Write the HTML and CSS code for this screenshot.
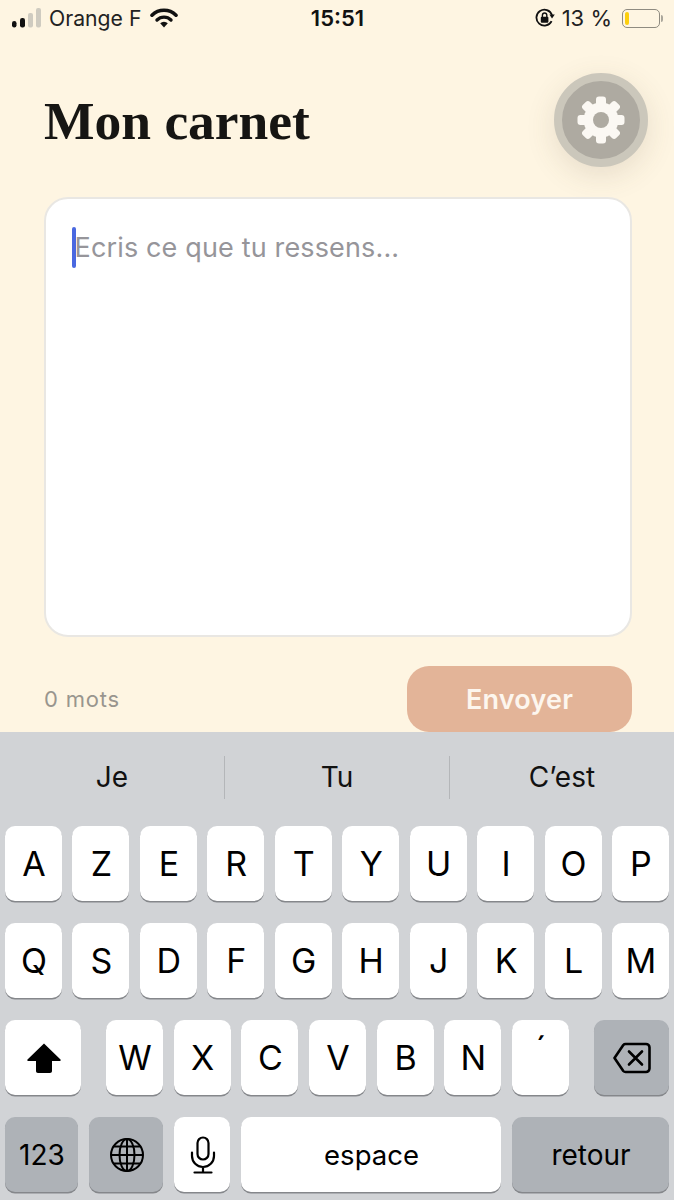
FILE: index.html
```html
<!DOCTYPE html>
<html lang="fr">
<head>
<meta charset="utf-8">
<title>Mon carnet</title>
<link rel="stylesheet" href="styles.css">
</head>
<body>
<div class="app">
  <div class="status">
    <div class="status-left">
      <svg class="signal" width="29" height="20" viewBox="0 0 29 20"><rect x="0" y="13" width="4.5" height="6.5" rx="2.2" fill="#111"/><rect x="8" y="10" width="5" height="9.5" rx="2.2" fill="#111"/><rect x="16" y="5" width="5" height="14.5" rx="2" fill="#cfcbc0"/><rect x="24" y="0" width="5" height="19.5" rx="2" fill="#cfcbc0"/></svg>
      <span class="carrier">Orange F</span>
      <svg class="wifi" width="28" height="20" viewBox="0 0 28 20"><path d="M2 7.2a17 17 0 0 1 24 0" fill="none" stroke="#111" stroke-width="3.6" stroke-linecap="round"/><path d="M7 12a10 10 0 0 1 14 0" fill="none" stroke="#111" stroke-width="3.4" stroke-linecap="round"/><path d="M10.2 15.2a5.4 5.4 0 0 1 7.6 0L14 19.4z" fill="#111"/></svg>
    </div>
    <div class="time">15:51</div>
    <div class="status-right">
      <svg class="lock" width="20" height="20" viewBox="0 0 20 20"><path d="M16.6 13.2A8 8 0 1 1 17 7" fill="none" stroke="#111" stroke-width="1.8"/><path d="M14.4 6.5h5.4L17 10.4z" fill="#111"/><rect x="5.8" y="8.8" width="7.6" height="6" rx="1" fill="#111"/><path d="M7.4 9V7.2a2.2 2.2 0 0 1 4.4 0V9" fill="none" stroke="#111" stroke-width="1.4"/></svg>
      <span class="battery-text">13 %</span>
      <div class="battery"><div class="battery-fill"></div></div>
      <div class="battery-tip"></div>
    </div>
  </div>

  <main class="main">
    <header class="header">
      <h1 class="title">Mon carnet</h1>
      <button class="gear" type="button" aria-label="Réglages">
        <svg width="48" height="48" viewBox="0 0 48 48">
          <g fill="#fbf8f3">
            <rect x="19" y="0.5" width="10" height="47" rx="3"/>
            <rect x="19" y="0.5" width="10" height="47" rx="3" transform="rotate(45 24 24)"/>
            <rect x="19" y="0.5" width="10" height="47" rx="3" transform="rotate(90 24 24)"/>
            <rect x="19" y="0.5" width="10" height="47" rx="3" transform="rotate(135 24 24)"/>
            <circle cx="24" cy="24" r="17.500"/>
          </g>
          <circle cx="24" cy="24" r="8" fill="#aeaaa1"/>
        </svg>
      </button>
    </header>
    <section class="card">
      <div class="input-line"><span class="caret"></span><span class="placeholder">Ecris ce que tu ressens...</span></div>
    </section>
    <footer class="footer">
      <span class="count">0 mots</span>
      <button class="send" type="button">Envoyer</button>
    </footer>
  </main>

  <div class="keyboard">
    <div class="suggestions">
      <div class="suggestion">Je</div>
      <div class="suggestion suggestion-mid">Tu</div>
      <div class="suggestion">C’est</div>
    </div>
    <div class="row">
      <div class="key">A</div><div class="key">Z</div><div class="key">E</div><div class="key">R</div><div class="key">T</div><div class="key">Y</div><div class="key">U</div><div class="key">I</div><div class="key">O</div><div class="key">P</div>
    </div>
    <div class="row">
      <div class="key">Q</div><div class="key">S</div><div class="key">D</div><div class="key">F</div><div class="key">G</div><div class="key">H</div><div class="key">J</div><div class="key">K</div><div class="key">L</div><div class="key">M</div>
    </div>
    <div class="row">
      <div class="key key-shift">
        <svg width="36" height="32" viewBox="0 0 36 32"><path d="M18 1.500 34.500 17.600c.5.6.2 1.400-.6 1.400H26v10c0 1.200-.8 2-2 2H12c-1.200 0-2-.8-2-2V19H2.100c-.8 0-1.100-.8-.6-1.400z" fill="#000"/></svg>
      </div>
      <div class="letters-mid">
        <div class="key">W</div><div class="key">X</div><div class="key">C</div><div class="key">V</div><div class="key">B</div><div class="key">N</div><div class="key key-accent">´</div>
      </div>
      <div class="key key-dark key-back">
        <svg width="38" height="32" viewBox="0 0 38 32"><path d="M12.500 2H33a3.500 3.500 0 0 1 3.500 3.500v21A3.500 3.500 0 0 1 33 30H12.500a3 3 0 0 1-2.200-1L1.500 16l8.800-13a3 3 0 0 1 2.200-1z" fill="none" stroke="#000" stroke-width="2.600" stroke-linejoin="round"/><path d="M16 9.500 29 22.500M29 9.500 16 22.500" stroke="#000" stroke-width="2.600" stroke-linecap="round"/></svg>
      </div>
    </div>
    <div class="row">
      <div class="key key-dark key-123">123</div>
      <div class="key key-dark key-globe">
        <svg width="36" height="36" viewBox="0 0 36 36" fill="none" stroke="#000" stroke-width="2"><circle cx="18" cy="18" r="16"/><ellipse cx="18" cy="18" rx="7.500" ry="16"/><path d="M18 2v32M2 18h32M4.500 9.500h27M4.500 26.500h27"/></svg>
      </div>
      <div class="key key-mic">
        <svg width="26" height="38" viewBox="0 0 26 38" fill="none" stroke="#000" stroke-width="2.200"><rect x="7.500" y="1.500" width="11" height="22" rx="5.500"/><path d="M2 16.500v3.500a11 11 0 0 0 22 0v-3.500M13 31v5M4.500 36.500h17" stroke-linecap="round"/></svg>
      </div>
      <div class="key key-space">espace</div>
      <div class="key key-dark key-return">retour</div>
    </div>
  </div>
</div>
</body>
</html>
```

FILE: styles.css
```css
* { box-sizing: border-box; }
html, body { margin: 0; padding: 0; }
body { width: 674px; height: 1200px; overflow: hidden; background: #fef5e2; }
.app { display: flex; flex-direction: column; height: 1200px; color: #111; font-family: Inter, "Liberation Sans", sans-serif; }

.status { display: grid; grid-template-columns: 1fr auto 1fr; align-items: center; height: 36px; padding: 0 11px 0 12px; flex: none; }
.status-left, .status-right { display: flex; align-items: center; }
.status-right { justify-content: flex-end; }
.signal { margin-top: -1px; }
.carrier { margin-left: 8px; font-size: 21.200px; color: #222; }
.wifi { margin-left: 9px; }
.time { font-size: 22px; font-weight: 600; }
.lock { margin-right: 7px; }
.battery-text { font-size: 22px; color: #222; }
.battery { margin-left: 10px; width: 38px; height: 19px; border: 1.500px solid #8f8b80; border-radius: 5px; padding: 2px; }
.battery-fill { width: 4px; height: 100%; background: #fdcf0e; border-radius: 2px; }
.battery-tip { width: 2px; height: 7px; background: #aaa69b; border-radius: 0 2px 2px 0; margin-left: 1px; }

.main { flex: 1; display: flex; flex-direction: column; padding: 0 42px 0 44px; min-height: 0; }
.header { display: flex; align-items: center; justify-content: space-between; height: 161px; padding-top: 7px; margin-right: -16px; }
.title { margin: 4px 0 0; font-family: "Liberation Serif", serif; font-weight: 700; font-size: 53.500px; line-height: 1; color: #161513; }
.gear { width: 94px; height: 94px; flex: none; display: flex; align-items: center; justify-content: center; padding: 0; border: 8px solid #cbc7bb; border-radius: 50%; background: #aeaaa1; box-shadow: 0 8px 30px rgba(90, 80, 60, .14); }

.card { height: 440px; background: #fff; border: 2px solid #e9e7e3; border-radius: 24px; padding: 27px 26px; flex: none; }
.input-line { display: flex; align-items: center; height: 42px; }
.caret { width: 3.500px; height: 41px; background: #4a68e0; border-radius: 2px; flex: none; margin-right: -1px; }
.placeholder { font-size: 27px; letter-spacing: .15px; color: #96959a; }

.footer { display: flex; align-items: flex-start; justify-content: space-between; margin-top: 29px; }
.count { font-size: 22px; letter-spacing: .8px; color: #99958e; line-height: 66px; }
.send { width: 225px; height: 66px; border: 0; border-radius: 22px; background: #e3b498; color: #fdf6ee; font-family: inherit; font-size: 27px; font-weight: 600; letter-spacing: .2px; padding: 0; }

.keyboard { flex: none; background: #d1d3d6; padding: 0 5px 7px; height: 468px; font-family: Inter, "Liberation Sans", sans-serif; }
.suggestions { display: flex; height: 94px; margin: 0 -5px; align-items: flex-start; }
.suggestion { flex: 1; margin-top: 24px; height: 43px; line-height: 43px; text-align: center; font-size: 28px; color: #111; }
.suggestion-mid { border-left: 1.500px solid #b4b6b9; border-right: 1.500px solid #b4b6b9; }

.row { display: flex; justify-content: space-between; height: 75px; margin-bottom: 22px; }
.key { width: 57px; height: 75px; flex: none; display: flex; align-items: center; justify-content: center; padding-left: 1px; background: #fff; border-radius: 10px; box-shadow: 0 1.500px 0 #85878b; font-size: 34px; color: #000; }
.letters-mid { display: flex; justify-content: space-between; width: 463px; }
.key-dark { background: #aeb2b7; }
.key-shift { width: 76px; }
.key-back { width: 75px; }
.key-accent { align-items: flex-start; padding-top: 8px; }
.key-123 { width: 73px; font-size: 28px; }
.key-globe { width: 74px; }
.key-mic { width: 56px; }
.key-space { width: 260px; font-size: 27.500px; }
.key-return { width: 157px; font-size: 28px; }
```
